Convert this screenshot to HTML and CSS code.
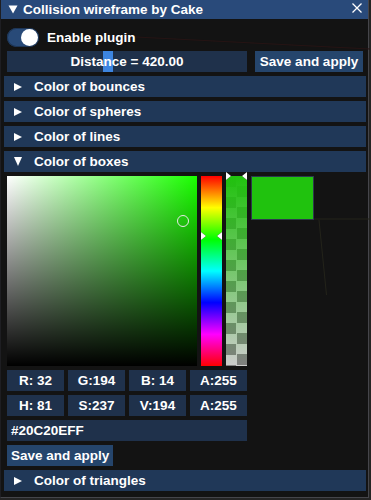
FILE: index.html
```html
<!DOCTYPE html>
<html>
<head>
<meta charset="utf-8">
<link rel="stylesheet" href="styles.css">
</head>
<body>
<div class="window">
  <svg class="scene-lines" width="369" height="498" viewBox="0 0 369 498">
    <line x1="135" y1="37" x2="369" y2="49" stroke="#261414" stroke-width="1"/>
    <line x1="312" y1="219" x2="369" y2="219" stroke="#25251a" stroke-width="1"/>
    <line x1="318" y1="220" x2="325.5" y2="295" stroke="#23231a" stroke-width="1"/>
  </svg>
  <div class="titlebar">
    <svg class="title-arrow" width="10" height="10" viewBox="0 0 10 10"><polygon points="0.5,1.5 9.5,1.5 5,9.5" fill="#fff"/></svg>
    <span class="title-text">Collision wireframe by Cake</span>
    <svg class="close" width="12" height="12" viewBox="0 0 12 12"><path d="M1.5 1.5 L10.5 10.5 M10.5 1.5 L1.5 10.5" stroke="#fff" stroke-width="1.3" fill="none"/></svg>
  </div>
  <div class="content">
    <div class="toggle-row">
      <div class="toggle"><div class="knob"></div></div>
      <span class="label">Enable plugin</span>
    </div>
    <div class="slider-row">
      <div class="slider">
        <div class="grab"></div>
        <span class="slider-text">Distance = 420.00</span>
      </div>
      <div class="btn btn-wide">Save and apply</div>
    </div>
    <div class="header"><span class="arrow-right"></span><span>Color of bounces</span></div>
    <div class="header"><span class="arrow-right"></span><span>Color of spheres</span></div>
    <div class="header"><span class="arrow-right"></span><span>Color of lines</span></div>
    <div class="header"><span class="arrow-down"></span><span>Color of boxes</span></div>
    <div class="picker">
      <div class="sv"><div class="sv-cursor"></div></div>
      <div class="hue">
        <span class="mk mk-l mk-hue"></span>
        <span class="mk mk-r mk-hue"></span>
      </div>
      <div class="alpha">
        <span class="mk mk-l mk-alpha"></span>
        <span class="mk mk-r mk-alpha"></span>
      </div>
      <div class="preview"></div>
    </div>
    <div class="inputs">
      <div class="field">R: 32</div>
      <div class="field">G:194</div>
      <div class="field">B: 14</div>
      <div class="field">A:255</div>
    </div>
    <div class="inputs">
      <div class="field">H: 81</div>
      <div class="field">S:237</div>
      <div class="field">V:194</div>
      <div class="field">A:255</div>
    </div>
    <div class="hex">#20C20EFF</div>
    <div class="btn-row"><div class="btn">Save and apply</div></div>
    <div class="header"><span class="arrow-right"></span><span>Color of triangles</span></div>
  </div>
</div>
</body>
</html>
```

FILE: styles.css
```css
html, body {
  margin: 0;
  padding: 0;
}
body {
  background: #242424;
  width: 371px;
  height: 500px;
  overflow: hidden;
  font: bold 13.5px "Liberation Sans", Arial, sans-serif;
  color: #fff;
}
.window {
  position: relative;
  width: 367px;
  height: 497px;
  background: #131313;
  border-left: 1px solid #1e1e22;
  border-right: 1px solid #45454a;
  border-bottom: 1px solid #45454a;
}
.scene-lines {
  position: absolute;
  left: 0;
  top: 0;
}
.titlebar {
  position: relative;
  height: 19px;
  background: #294a7a;
  display: flex;
  align-items: center;
}
.title-arrow {
  margin-left: 7px;
  margin-top: -1px;
}
.title-text {
  margin-left: 5px;
  line-height: 19px;
}
.close {
  margin-left: auto;
  margin-right: 5px;
  margin-top: -3px;
}
.content {
  position: relative;
  padding: 8px 0 0 6px;
  display: flex;
  flex-direction: column;
  gap: 4px;
}
.toggle-row {
  height: 20px;
  display: flex;
  align-items: center;
}
.toggle {
  width: 32px;
  height: 19px;
  border-radius: 10px;
  background: #284a78;
  box-shadow: inset 0 0 0 1px #1d3556;
  display: flex;
  align-items: center;
  justify-content: flex-end;
  padding-right: 1px;
  box-sizing: border-box;
}
.knob {
  width: 17px;
  height: 17px;
  border-radius: 50%;
  background: #fff;
}
.label {
  margin-left: 8px;
}
.slider-row {
  display: flex;
  gap: 8px;
  height: 21px;
}
.slider {
  position: relative;
  width: 240px;
  height: 21px;
  background: #1f314b;
  display: flex;
  align-items: center;
  justify-content: center;
}
.grab {
  position: absolute;
  left: 96px;
  top: 0;
  width: 10px;
  height: 21px;
  background: #3d85e0;
}
.slider-text {
  position: relative;
}
.btn {
  height: 21px;
  line-height: 21px;
  background: #25456c;
  padding: 0 4px;
  white-space: nowrap;
}
.btn-wide {
  width: 108px;
  padding: 0;
  text-align: center;
}
.btn-row {
  display: flex;
}
.header {
  width: 362px;
  margin-left: -3px;
  height: 21px;
  background: #203858;
  display: flex;
  align-items: center;
}
.header span:last-child {
  margin-left: 12px;
}
.arrow-right {
  margin-left: 10px;
  width: 0;
  height: 0;
  border-left: 8px solid #fff;
  border-top: 4.5px solid transparent;
  border-bottom: 4.5px solid transparent;
}
.arrow-down {
  margin-left: 10px;
  width: 0;
  height: 0;
  border-top: 9px solid #fff;
  border-left: 4px solid transparent;
  border-right: 4px solid transparent;
}
.picker {
  display: flex;
  gap: 4px;
  height: 190px;
  align-items: flex-start;
}
.sv {
  position: relative;
  width: 190px;
  height: 190px;
  background:
    linear-gradient(to top, #000, rgba(0,0,0,0)),
    linear-gradient(to right, #fff, rgb(26,255,0));
}
.sv-cursor {
  position: absolute;
  left: 170px;
  top: 39px;
  width: 10px;
  height: 10px;
  border: 1.5px solid #e8e8e8;
  border-radius: 50%;
}
.hue {
  position: relative;
  width: 21px;
  height: 190px;
  background: linear-gradient(to bottom,
    #ff0000 0%, #ffff00 16.667%, #00ff00 33.333%, #00ffff 50%,
    #0000ff 66.667%, #ff00ff 83.333%, #ff0000 100%);
}
.alpha {
  position: relative;
  width: 21px;
  height: 190px;
  background:
    linear-gradient(to bottom, rgb(32,194,14), rgba(32,194,14,0)),
    conic-gradient(#cccccc 0 25%, #808080 0 50%, #cccccc 0 75%, #808080 0) 0 0 / 21px 21px;
}
.mk {
  position: absolute;
  width: 0;
  height: 0;
  border-top: 4px solid transparent;
  border-bottom: 4px solid transparent;
  filter: drop-shadow(0 0 0.6px #000);
}
.mk-l {
  left: 0;
  border-left: 5px solid #fff;
}
.mk-r {
  right: 0;
  border-right: 5px solid #fff;
}
.mk-hue {
  top: 56px;
}
.mk-alpha {
  top: -4px;
}
.preview {
  width: 61px;
  height: 42px;
  background: rgb(32,194,14);
  border: 1px solid #2c3a4c;
}
.inputs {
  display: flex;
  gap: 4px;
  height: 21px;
}
.field {
  width: 57px;
  height: 21px;
  line-height: 21px;
  background: #1f314b;
  text-align: center;
}
.hex {
  width: 236px;
  height: 21px;
  line-height: 21px;
  background: #1f314b;
  padding-left: 4px;
}
```
